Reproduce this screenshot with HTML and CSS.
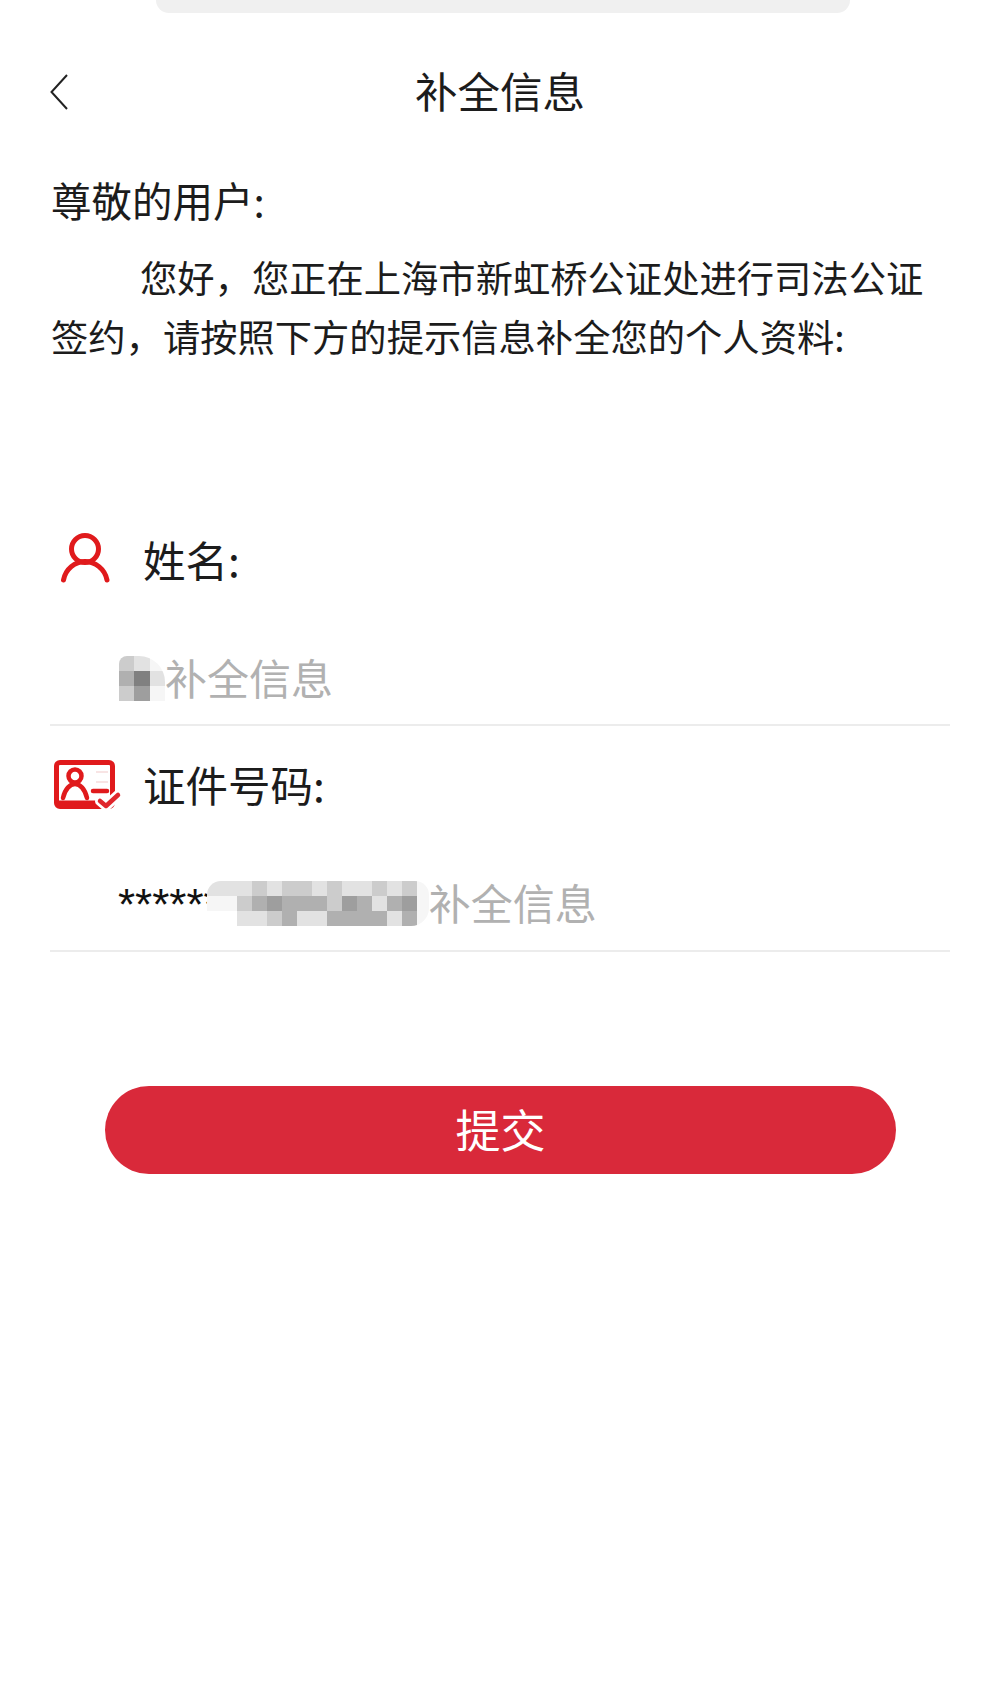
FILE: index.html
```html
<!DOCTYPE html>
<html lang="zh-CN">
<head>
<meta charset="utf-8">
<title>补全信息</title>
<link rel="stylesheet" href="styles.css">
</head>
<body>
<div class="page">
  <div class="top-pill"></div>
  <header class="nav">
    <svg class="back" viewBox="0 0 18 36" aria-hidden="true"><path d="M17 1 1.500 18 17 35"/></svg>
    <h1 class="title">补全信息</h1>
  </header>
  <section class="intro">
    <p class="greeting">尊敬的用户:</p>
    <p class="message">您好，您正在上海市新虹桥公证处进行司法公证签约，请按照下方的提示信息补全您的个人资料:</p>
  </section>
  <form class="form">
    <div class="field field-name">
      <div class="label-row">
        <svg class="label-icon" viewBox="0 0 93 60" aria-hidden="true">
          <circle class="stroke" cx="35" cy="19" r="13.500"/>
          <path class="stroke" d="M13.500 50C15.500 39 25 31.500 35 31.500S55 39 57 50"/>
        </svg>
        <span class="label">姓名:</span>
      </div>
      <div class="input-row">
        <div class="mosaic mosaic-name">
          <i class="s2"></i><i class="s1"></i><i class="s0"></i>
          <i class="s3"></i><i class="s5"></i><i class="s1"></i>
          <i class="s2"></i><i class="s4"></i><i class="s0"></i>
        </div>
        <span class="placeholder">补全信息</span>
      </div>
    </div>
    <div class="field field-id">
      <div class="label-row">
        <svg class="label-icon" viewBox="0 0 93 60" aria-hidden="true">
          <rect class="stroke" x="6.500" y="7.500" width="56" height="44" rx="3.500"/>
          <path class="faint" d="M46 17H58M46 27H58"/>
          <circle class="thin" cx="25" cy="21" r="6.500"/>
          <path class="thin" d="M13 43C15 34 20 29 25 29S35 34 37 43"/>
          <path class="solid" d="M8 48H50"/>
          <path class="thin" d="M43 36H57"/>
          <path class="halo" d="M50 46 56 51 68 40"/>
          <path class="check" d="M50 46 56 51 68 40"/>
        </svg>
        <span class="label">证件号码:</span>
      </div>
      <div class="input-row">
        <span class="stars">******</span>
        <div class="mosaic mosaic-id">
          <i class="s1"></i><i class="s1"></i><i class="s1"></i><i class="s2"></i><i class="s1"></i><i class="s2"></i><i class="s2"></i><i class="s1"></i><i class="s2"></i><i class="s1"></i><i class="s1"></i><i class="s2"></i><i class="s1"></i><i class="s2"></i><i class="s0"></i>
          <i class="s0"></i><i class="s0"></i><i class="s2"></i><i class="s3"></i><i class="s4"></i><i class="s3"></i><i class="s3"></i><i class="s3"></i><i class="s2"></i><i class="s4"></i><i class="s3"></i><i class="s1"></i><i class="s3"></i><i class="s4"></i><i class="s0"></i>
          <i class="s6"></i><i class="s6"></i><i class="s1"></i><i class="s1"></i><i class="s2"></i><i class="s3"></i><i class="s1"></i><i class="s1"></i><i class="s3"></i><i class="s3"></i><i class="s3"></i><i class="s3"></i><i class="s1"></i><i class="s3"></i><i class="s0"></i>
        </div>
        <span class="placeholder">补全信息</span>
      </div>
    </div>
    <button class="submit" type="button">提交</button>
  </form>
</div>
</body>
</html>
```

FILE: styles.css
```css
* { box-sizing: border-box; }

html, body {
  margin: 0;
  background: #fff;
}

.page {
  height: 1707px;
  overflow: hidden;
  color: #1c1c1c;
  font-family: "Noto Sans CJK SC", "Noto Sans", sans-serif;
}

.top-pill {
  width: 694px;
  height: 13px;
  margin: 0 0 0 156px;
  background: #f0f0f0;
  border-radius: 0 0 26px 26px;
}

.nav {
  display: grid;
  grid-template-columns: 18px 1fr 18px;
  align-items: center;
  height: 158px;
  padding: 0 50px;
}

.back {
  width: 18px;
  height: 36px;
  fill: none;
  stroke: #222;
  stroke-width: 2;
}

.title {
  margin: 0;
  padding-bottom: 4px;
  font-size: 42.500px;
  font-weight: 400;
  line-height: 60px;
  text-align: center;
}

.intro {
  padding: 0 50px 0 51px;
  font-size: 37.300px;
}

.greeting {
  margin: 0 0 19px;
  font-size: 40.500px;
  line-height: 58px;
}

.message {
  margin: 2px 0 0;
  line-height: 59px;
  text-indent: 89px;
}

.form {
  margin-top: 164px;
}

.field {
  margin: 0 50px;
}

.field-id {
  margin-top: 29px;
}

.label-row {
  display: flex;
  align-items: center;
  height: 60px;
}

.label-icon {
  flex: none;
  width: 93px;
  height: 60px;
  overflow: visible;
  fill: none;
}

.stroke {
  fill: none;
  stroke: #e01a1c;
  stroke-width: 5;
  stroke-linecap: round;
}

.thin {
  fill: none;
  stroke: #e01a1c;
  stroke-width: 4.500;
  stroke-linecap: round;
}

.solid {
  fill: none;
  stroke: #e01a1c;
  stroke-width: 5;
}

.faint {
  fill: none;
  stroke: #f6dcdc;
  stroke-width: 1.500;
}

.halo {
  fill: none;
  stroke: #fff;
  stroke-width: 10;
  stroke-linecap: round;
}

.check {
  fill: none;
  stroke: #e0262c;
  stroke-width: 4.500;
  stroke-linecap: round;
  stroke-linejoin: round;
}

.label {
  padding-bottom: 3px;
  font-size: 42.500px;
  line-height: 60px;
}

.input-row {
  display: flex;
  align-items: center;
  height: 136px;
  padding: 59px 0 15px 69px;
  border-bottom: 2px solid #ececec;
}

.field-id .input-row {
  height: 137px;
  padding-bottom: 16px;
  padding-left: 68px;
}

.placeholder {
  padding-bottom: 4px;
  color: #b1b1b1;
  font-size: 42px;
  line-height: 60px;
}

.stars {
  flex: none;
  margin-right: -14px;
  padding-top: 2px;
  color: #111;
  font-family: "Liberation Sans", sans-serif;
  font-size: 44px;
  line-height: 60px;
  white-space: nowrap;
}

.mosaic {
  display: grid;
  position: relative;
  flex: none;
  grid-auto-rows: 15px;
  overflow: hidden;
}

.mosaic i {
  display: block;
}

.mosaic-name {
  grid-template-columns: repeat(3, 15.330px);
  margin-top: -2px;
  border-radius: 8px 26px 0 0;
}

.mosaic-id {
  grid-template-columns: repeat(14, 15px) 12px;
  margin-top: -1px;
  border-radius: 14px 14px 18px 0;
}

.s0 { background: #f6f6f6; }
.s1 { background: #e2e2e2; }
.s2 { background: #cccccc; }
.s3 { background: #b0b0b0; }
.s4 { background: #9e9e9e; }
.s5 { background: #808080; }
.s6 { background: #fff; }

.submit {
  display: block;
  width: 791px;
  height: 88px;
  margin: 134px 0 0 105px;
  padding: 0 0 2px;
  border: 0;
  border-radius: 44px;
  background: #d9293a;
  color: #fff;
  font-family: inherit;
  font-size: 45px;
  line-height: 86px;
}
```
